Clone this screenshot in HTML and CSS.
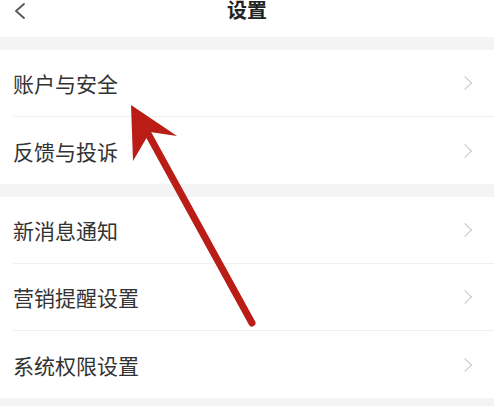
FILE: index.html
```html
<!DOCTYPE html>
<html lang="zh-CN">
<head>
    <meta charset="UTF-8">
    <meta name="viewport" content="width=device-width, initial-scale=1.0">
    <title>设置</title>
    <link rel="stylesheet" href="styles.css">
</head>
<body>
    <div class="header">
        <svg class="back" width="14" height="16" viewBox="0 0 14 16">
            <path d="M11 1 L3 8 L11 15" fill="none" stroke="#555" stroke-width="1.8" stroke-linecap="round" stroke-linejoin="round"/>
        </svg>
        <h1 class="title">设置</h1>
    </div>

    <div class="group">
        <div class="row"><span>账户与安全</span><i class="arrow-right"></i></div>
        <div class="row"><span>反馈与投诉</span><i class="arrow-right"></i></div>
    </div>

    <div class="group">
        <div class="row"><span>新消息通知</span><i class="arrow-right"></i></div>
        <div class="row"><span>营销提醒设置</span><i class="arrow-right"></i></div>
        <div class="row"><span>系统权限设置</span><i class="arrow-right"></i></div>
    </div>

    <!-- marcação vermelha por cima da tela -->
    <svg class="mark" width="494" height="406" viewBox="0 0 494 406">
        <line x1="146" y1="130" x2="252" y2="323" stroke="#b91d15" stroke-width="7" stroke-linecap="round"/>
        <polygon points="131,105 177,136 150,132 133,161" fill="#b91d15"/>
    </svg>
</body>
</html>
```

FILE: styles.css
```css
body {
    margin: 0;
    background-color: #f4f4f4;
    font-family: "Noto Sans CJK SC", "Noto Sans", sans-serif;
    color: #333;
    height: 406px;
    overflow: hidden;
    position: relative;
}
.header {
    height: 37px;
    background-color: #fff;
    display: flex;
    justify-content: center;
    position: relative;
    margin-bottom: 13px;
}
.back {
    position: absolute;
    left: 13px;
    top: 3px;
}
.title {
    margin: 0;
    font-size: 20px;
    line-height: 20px;
    font-weight: bold;
    color: #222;
}
.group {
    background-color: #fff;
    margin-bottom: 13px;
}
.row {
    height: 67px;
    margin-left: 13px;
    padding-right: 24px;
    display: flex;
    align-items: center;
    justify-content: space-between;
    font-size: 21px;
    border-bottom: 1px solid #efefef;
    box-sizing: border-box;
}
.row:last-child {
    border-bottom: none;
}
.arrow-right {
    width: 9px;
    height: 9px;
    border-top: 1.5px solid #c6c6c6;
    border-right: 1.5px solid #c6c6c6;
    transform: rotate(45deg);
}
.mark {
    position: absolute;
    left: 0;
    top: 0;
}
```
